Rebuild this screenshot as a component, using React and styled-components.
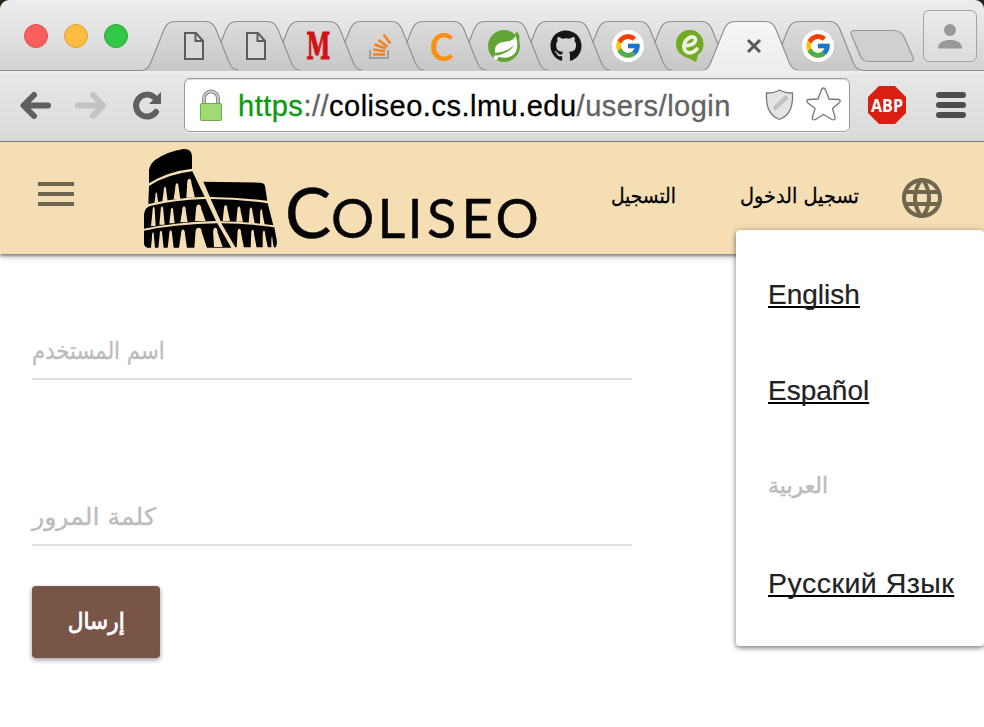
import React from "react";
import styled, { createGlobalStyle } from "styled-components";
import { FaGithub } from "react-icons/fa";
import { FcGoogle } from "react-icons/fc";
import { MdMenu, MdLanguage } from "react-icons/md";

const GlobalStyle = createGlobalStyle`
  * { box-sizing: border-box; }
  html, body { margin: 0; background: #fff; overflow: hidden; }
  body { font-family: "Liberation Sans", "DejaVu Sans", sans-serif; }
  svg { display: block; }
`;

const Window = styled.div`
  width: 984px;
  height: 727px;
  background: #fff;
  overflow: hidden;
  display: flex;
  flex-direction: column;
`;

const Desktop = styled.div`
  background: #24211c;
  flex: none;
`;

const TabStrip = styled.div`
  height: 71px;
  display: flex;
  border-radius: 9px 9px 0 0;
  background: linear-gradient(#ededed, #e4e4e4 40%, #d3d3d3);
  border-bottom: 1px solid #8f8f8f;
`;

const Lights = styled.div`
  display: flex;
  gap: 16px;
  padding: 24px 0 0 24px;
  width: 143px;
  flex: none;
`;

const Light = styled.span`
  width: 24px;
  height: 24px;
  border-radius: 50%;
  background: ${(p) => p.$fill};
  border: 1px solid ${(p) => p.$edge};
`;

const Tabs = styled.div`
  display: flex;
  width: 707px;
  flex: none;
  padding-top: 20px;
`;

const TabBox = styled.div`
  position: relative;
  flex: none;
  width: 98px;
  height: 51px;
  margin-right: ${(p) => (p.$wide ? -34 : -36)}px;
  z-index: ${(p) => p.$level};
  display: flex;
  justify-content: center;
  align-items: center;
  padding-left: 4px;
`;

const TabShape = styled.svg`
  position: absolute;
  inset: 0;
`;

const TabIcon = styled.div`
  position: relative;
  display: flex;
  justify-content: center;
  width: 32px;
`;

const GoogleDisc = styled.div`
  width: 32px;
  height: 32px;
  border-radius: 50%;
  background: #fff;
  display: grid;
  place-items: center;
`;

const Letter = styled.span`
  display: block;
  font: ${(p) => p.$font};
  color: ${(p) => p.$color};
  -webkit-text-stroke: ${(p) => p.$weight || 0}px currentColor;
  transform: scaleX(${(p) => p.$stretch || 1});
`;

const NewTab = styled.svg`
  margin-top: 29px;
  flex: none;
`;

const Profile = styled.div`
  width: 54px;
  height: 52px;
  margin: 10px 0 0 7px;
  flex: none;
  border: 1px solid #a3a3a3;
  border-radius: 6px;
  background: linear-gradient(#ebebeb, #dcdcdc);
  display: flex;
  justify-content: center;
  padding-top: 13px;
`;

const Toolbar = styled.div`
  height: 71px;
  flex: none;
  display: flex;
  align-items: center;
  background: linear-gradient(#efefef, #e6e6e6 10%, #dadada);
  border-bottom: 1px solid #7b8184;
`;

const NavIcons = styled.div`
  width: 184px;
  flex: none;
`;

const UrlBar = styled.div`
  width: 666px;
  height: 54px;
  margin-bottom: 2px;
  flex: none;
  border: 1px solid #999;
  border-radius: 6px;
  background: #fff;
  box-shadow: inset 0 1px 1px #ddd, 0 1px 0 #f1f1f1;
  display: flex;
  align-items: center;
`;

const UrlText = styled.div`
  width: 510px;
  margin-left: 15px;
  padding-top: 2px;
  font-size: 29px;
  line-height: 32px;
  letter-spacing: 0.5px;
  -webkit-text-stroke: 0.3px currentColor;
  color: #636363;
  white-space: nowrap;
`;

const Scheme = styled.span`
  color: #0a9a10;
`;

const Host = styled.span`
  color: #000;
`;

const Header = styled.header`
  height: 112px;
  flex: none;
  display: flex;
  background: #f5deb3;
  box-shadow: 0 2px 3px rgba(0, 0, 0, 0.45), 0 3px 8px rgba(0, 0, 0, 0.15);
  color: #6f6650;
`;

const MenuButton = styled.div`
  padding: 28px 0 0 32px;
  width: 143px;
  flex: none;
`;

const Logo = styled.svg`
  flex: none;
`;

const NavLinks = styled.nav`
  display: flex;
  justify-content: flex-end;
  gap: 64px;
  width: 303px;
  margin-left: 13px;
  padding-top: 36px;
`;

const ArabicText = styled.span`
  display: block;
  font: ${(p) => p.$size}px / ${(p) => p.$line || 36}px "DejaVu Sans", sans-serif;
  -webkit-text-stroke: ${(p) => p.$weight || 0}px currentColor;
  direction: rtl;
  white-space: nowrap;
  transform: scaleX(${(p) => p.$stretch || 1});
  transform-origin: ${(p) => p.$origin || "left"};
`;

const NavLink = styled.a`
  color: #000;
  width: ${(p) => p.$width}px;
`;

const LanguageButton = styled.div`
  padding: 32px 0 0 39px;
`;

const Content = styled.main`
  position: relative;
  flex: 1;
`;

const Form = styled.form`
  width: 632px;
  padding: 66px 0 0 32px;
`;

const Field = styled.div`
  height: 60px;
  margin-bottom: ${(p) => p.$gap}px;
  border-bottom: 2px solid #e0e0e0;
  display: flex;
  align-items: center;
  padding-top: 3px;
  color: #bbb;
`;

const Submit = styled.button`
  display: grid;
  place-items: center;
  width: 128px;
  height: 72px;
  border: 0;
  border-radius: 4px;
  background: #795548;
  color: #fff;
  box-shadow: 0 2px 5px rgba(0, 0, 0, 0.4);
  padding: 0 0 2px;
`;

const LanguageMenu = styled.div`
  position: absolute;
  top: -24px;
  left: 736px;
  width: 248px;
  height: 416px;
  padding: 16px 0;
  border-radius: 4px;
  background: #fff;
  box-shadow: 0 2px 5px rgba(0, 0, 0, 0.45), 0 0 6px rgba(0, 0, 0, 0.15);
`;

const LanguageItem = styled.div`
  display: flex;
  height: 96px;
  padding: 33px 0 0 32px;
  font-size: ${(p) => p.$size || 28}px;
  line-height: 32px;
  letter-spacing: ${(p) => p.$track || 0}px;
  -webkit-text-stroke: 0.2px currentColor;
  color: ${(p) => (p.$current ? "#bbb" : "#222")};
  white-space: nowrap;
`;

const LanguageLink = styled.span`
  text-decoration: underline;
  text-decoration-color: #000;
  text-decoration-thickness: 2px;
  text-underline-offset: 2px;
  text-decoration-skip-ink: none;
`;

const PageIcon = () => (
  <svg width="20" height="28" viewBox="0 0 20 28" fill="none" stroke="#5c5c5c" strokeWidth="2">
    <path d="M1 1H12L19 9V27H1Z" fill="#d9d9d9" />
    <path d="M11.500 1V9H19" />
  </svg>
);

const StackIcon = () => (
  <svg width="24" height="28" viewBox="0 0 24 28" fill="none">
    <path d="M2 18V26H20V18" stroke="#9a9da3" strokeWidth="2" />
    <g stroke="#f77f1e" strokeWidth="2.500">
      <path d="M5 22.500H17" />
      <path d="M5.200 17.500 17 19.300" />
      <path d="M6.500 12.500 18 16.500" />
      <path d="M10.500 8 19.500 14.500" />
      <path d="M15.500 2.500 22.500 11.500" />
    </g>
  </svg>
);

const LeafIcon = () => (
  <svg width="32" height="32" viewBox="0 0 32 32">
    <circle cx="16" cy="16" r="16" fill="#62a534" />
    <path d="M29 1 31.500 6 31 14 26 6Z" fill="#62a534" />
    <path d="M27.500 6C25 11 20 11.500 15 12C9 13 6 17 7 23C12 22.500 20 21 26 15C23 21 15 24.500 8 26C16 29 23 28 27 23C30 19 30 12 27.500 6Z" fill="#fff" />
    <circle cx="8" cy="27.500" r="2.200" fill="#fff" />
  </svg>
);

const LeafPinIcon = () => (
  <svg width="28" height="32" viewBox="0 0 28 32">
    <path d="M13.500 0A13.500 14 0 0 0 0 14C0 22 6 26 12 28L20 32 22 25C26 22 27.500 18 27.500 14A13.500 14 0 0 0 13.500 0Z" fill="#72aa21" />
    <path d="M9 15.500C14 16 19 14 19.500 10C19.500 6.500 15 6 12 8.500C7.500 12 6.500 18 10 21.500C13.500 24 18 22.500 21 19" fill="none" stroke="#eef3e6" strokeWidth="3.600" strokeLinecap="round" />
  </svg>
);

const CloseIcon = () => (
  <svg width="16" height="16" viewBox="0 0 16 16">
    <path d="M2 2 14 14M14 2 2 14" stroke="#595959" strokeWidth="3" />
  </svg>
);

const Google = () => (
  <GoogleDisc>
    <FcGoogle size={28} />
  </GoogleDisc>
);

const Tab = ({ children, active, level, wide }) => (
  <TabBox $level={level} $wide={wide}>
    <TabShape width="98" height="51" viewBox="0 0 98 51">
      <defs>
        <linearGradient id="tabIdle" x1="0" y1="0" x2="0" y2="1">
          <stop offset="0" stopColor="#dcdcdc" />
          <stop offset="1" stopColor="#c7c7c7" />
        </linearGradient>
        <linearGradient id="tabActive" x1="0" y1="0" x2="0" y2="1">
          <stop offset="0" stopColor="#f6f6f6" />
          <stop offset="1" stopColor="#ededed" />
        </linearGradient>
      </defs>
      <path
        d="M0 51V50C4 50 6 47 8 42L20 12C23 4 26 1.500 32 1.500H62C68 1.500 71 4 74 12L86 42C88 47 90 50 95 50V51Z"
        fill={active ? "url(#tabActive)" : "url(#tabIdle)"}
      />
      <path
        d="M0 50C4 50 6 47 8 42L20 12C23 4 26 1.500 32 1.500H62C68 1.500 71 4 74 12L86 42C88 47 90 50 95 50"
        fill="none"
        stroke="#929292"
        strokeWidth="1.200"
      />
    </TabShape>
    <TabIcon>{children}</TabIcon>
  </TabBox>
);

const tabs = [
  <PageIcon />,
  <PageIcon />,
  <Letter $font={'bold 37px/32px "DejaVu Serif", serif'} $color="#cf1214" $stretch={0.58} $weight={1.2}>M</Letter>,
  <StackIcon />,
  <Letter $font={'bold 39px/30px Lato, sans-serif'} $color="#fb9013" $stretch={0.92}>C</Letter>,
  <LeafIcon />,
  <FaGithub size={32} color="#171515" />,
  <Google />,
  <LeafPinIcon />,
  <CloseIcon />,
  <Google />,
];

const arch = (cx, top, bottom, half, lean = 0) => {
  const n = half * 0.5;
  const shoulder = top + 14;
  return `M${cx - half + lean} ${bottom}L${cx - n} ${shoulder}C${cx - n} ${top - 4} ${cx + n} ${top - 4} ${cx + n} ${shoulder}L${cx + half + lean} ${bottom}Z`;
};

const arches = [
  arch(79, 157, 188, 6),
  arch(105, 140, 184, 8),
  arch(141, 129, 178, 10),
  arch(178, 116, 173, 13, 4),
  arch(71, 200, 258, 7, -1),
  arch(96, 198, 254, 8),
  arch(126, 203, 250, 8),
  arch(162, 198, 247, 11),
  arch(206, 193, 243, 16, 5),
  arch(287, 195, 243, 11, 2),
  arch(327, 199, 245, 10, 2),
  arch(363, 202, 249, 9, 2),
  arch(394, 207, 253, 7, 3),
  arch(69, 276, 324, 6, 0),
  arch(93, 272, 324, 8),
  arch(122, 270, 324, 9),
  arch(159, 268, 324, 12),
  arch(206, 263, 324, 19, 6),
  arch(256, 263, 321, 13, 9),
  arch(328, 266, 324, 11, 3),
  arch(368, 269, 324, 9, 3),
  arch(402, 272, 324, 8, 4),
  arch(426, 290, 324, 4, 2),
];

const ColiseoLogo = () => (
  <Logo width="400" height="112" viewBox="0 0 400 112">
    <g transform="translate(-13 -2) scale(.3333)">
      <g fill="#000">
        <path d="M57 130V92Q58 75 75 60Q110 35 160 27Q184 25 186 48V86Q110 95 57 130Z" />
        <path d="M57 138Q110 103 187 94L224 170Q120 175 55 192Z" />
        <path d="M220 125 390 128Q402 128 405 138L412 182Q320 172 240 171Z" />
        <path d="M42 265V225Q44 203 60 198Q130 180 227 177L258 243Q140 246 42 266Z" />
        <path d="M242 177Q330 178 413 190L430 256Q350 245 272 244Z" />
        <path d="M42 272Q140 252 262 250L304 323H52Q42 320 42 310Z" />
        <path d="M274 250Q350 250 433 262L441 305Q440 325 432 322H316Z" />
      </g>
      <path d={arches.join("")} fill="#f5deb3" />
    </g>
    <g fontFamily="Lato, sans-serif" fontSize="54" fill="#050505" stroke="#050505" strokeWidth="0.500">
      <text y="96" x="142" fontSize="69">C</text>
      <text y="96" x="188 234.500 264.500 284 318.500 352.500">OLISEO</text>
    </g>
  </Logo>
);

const NavigationIcons = () => (
  <NavIcons>
    <svg width="184" height="70" viewBox="0 71 184 70" fill="none">
      <g stroke="#5f5f5f" strokeWidth="6" strokeLinecap="round" strokeLinejoin="round">
        <path d="M48 105.500H24M34 95 23.500 105.500 34 116" />
        <path d="M103 105.500H78M93 95 103 105.500 93 116" stroke="#c3c3c3" />
        <path d="M156 112A11 11 0 1 1 154 97" />
      </g>
      <path d="M161 92V104H149Z" fill="#5f5f5f" />
    </svg>
  </NavIcons>
);

export default function App() {
  return (
    <>
      <GlobalStyle />
      <Window>
        <Desktop>
          <TabStrip>
            <Lights>
              <Light $fill="#fc5f5b" $edge="#e24b47" />
              <Light $fill="#fdbd40" $edge="#dfa13a" />
              <Light $fill="#33c748" $edge="#27a838" />
            </Lights>
            <Tabs>
              {tabs.map((icon, i) => (
                <Tab key={i} active={i === 9} level={i === 9 ? 20 : 12 - i} wide={i === 8 || i === 9}>
                  {icon}
                </Tab>
              ))}
            </Tabs>
            <NewTab width="66" height="34" viewBox="0 0 66 34">
              <path
                d="M5 1.500H43C49 1.500 52 3 54 8L62.500 27C64.500 31 63 32.500 60 32.500H19C14 32.500 12 31 10 26L1.500 6C0 3 2 1.500 5 1.500Z"
                fill="#d0d0d0"
                stroke="#979797"
                strokeWidth="1.200"
              />
            </NewTab>
            <Profile>
              <svg width="24" height="25" viewBox="0 0 24 25" fill="#999">
                <circle cx="12" cy="6" r="6" />
                <path d="M0 24.500C0 18 6 16 12 16S24 18 24 24.500Z" />
              </svg>
            </Profile>
          </TabStrip>
        </Desktop>

        <Toolbar>
          <NavigationIcons />
          <UrlBar>
            <svg width="38" height="34" viewBox="0 0 38 34">
              <path d="M19 16V10.500A7 7 0 0 1 33 10.500V16" fill="none" stroke="#8d8d8d" strokeWidth="4" />
              <path d="M19 16V10.500A7 7 0 0 1 33 10.500V16" fill="none" stroke="#d5d5d5" strokeWidth="1.500" />
              <rect x="15.500" y="15.500" width="21" height="17" rx="1" fill="#9fdc73" stroke="#6fa84d" />
            </svg>
            <UrlText>
              <Scheme>https</Scheme>://<Host>coliseo.cs.lmu.edu</Host>/users/login
            </UrlText>
            <svg width="100" height="40" viewBox="0 0 100 40">
              <path d="M31.500 5C27 8 23 8 18.500 8C18 20 20 30 31.500 34.500C43 30 45 20 44.500 8C40 8 36 8 31.500 5Z" fill="#e4e4e4" stroke="#777" strokeWidth="1.300" />
              <path d="M25 22 37 10 41 13 27 26Z" fill="#c2c2c2" />
              <path
                d="M75.500 3Q77 3 78 6L81 14L90 14.500Q94 15 91 18L84.500 23.500L87 32Q87.500 36 84 34.500L75.500 29.500L67.500 34.500Q63.500 36 64.500 32L67 23.500L60 18Q57 15 61 14.500L70 14L73 6Q74 3 75.500 3Z"
                fill="#fff"
                stroke="#777"
                strokeWidth="1.300"
              />
            </svg>
          </UrlBar>
          <svg width="134" height="70" viewBox="850 71 134 70">
            <path d="M879 86H895L906 97V113L895 124H879L868 113V97Z" fill="#d81f12" />
            <text x="887" y="112" textAnchor="middle" fontFamily="Open Sans, sans-serif" fontWeight="700" fontSize="18.500" textLength="32" lengthAdjust="spacingAndGlyphs" fill="#fff">ABP</text>
            <path d="M939 95H963M939 105H963M939 115H963" stroke="#4d4d4d" strokeWidth="6" strokeLinecap="round" />
          </svg>
        </Toolbar>

        <Header>
          <MenuButton>
            <MdMenu size={48} />
          </MenuButton>
          <ColiseoLogo />
          <NavLinks>
            <NavLink $width={64}>
              <ArabicText $size={21} $stretch={0.89} $weight={0.3} $origin="right">التسجيل</ArabicText>
            </NavLink>
            <NavLink $width={119}>
              <ArabicText $size={21} $stretch={0.92} $weight={0.3} $origin="right">تسجيل الدخول</ArabicText>
            </NavLink>
          </NavLinks>
          <LanguageButton>
            <MdLanguage size={48} />
          </LanguageButton>
        </Header>

        <Content>
          <Form>
            <Field $gap={106}>
              <ArabicText as="label" $size={24} $stretch={0.885} $weight={0.3}>اسم المستخدم</ArabicText>
            </Field>
            <Field $gap={40}>
              <ArabicText as="label" $size={24} $stretch={1.05} $weight={0.3}>كلمة المرور</ArabicText>
            </Field>
            <Submit type="button">
              <ArabicText $size={23} $stretch={0.94} $weight={0.8} $origin="center">إرسال</ArabicText>
            </Submit>
          </Form>
          <LanguageMenu>
            <LanguageItem>
              <LanguageLink>English</LanguageLink>
            </LanguageItem>
            <LanguageItem>
              <LanguageLink>Español</LanguageLink>
            </LanguageItem>
            <LanguageItem $current>
              <ArabicText $size={22} $line={30} $weight={0.5}>العربية</ArabicText>
            </LanguageItem>
            <LanguageItem $size={28.5} $track={0.5}>
              <LanguageLink>Русский Язык</LanguageLink>
            </LanguageItem>
          </LanguageMenu>
        </Content>
      </Window>
    </>
  );
}
